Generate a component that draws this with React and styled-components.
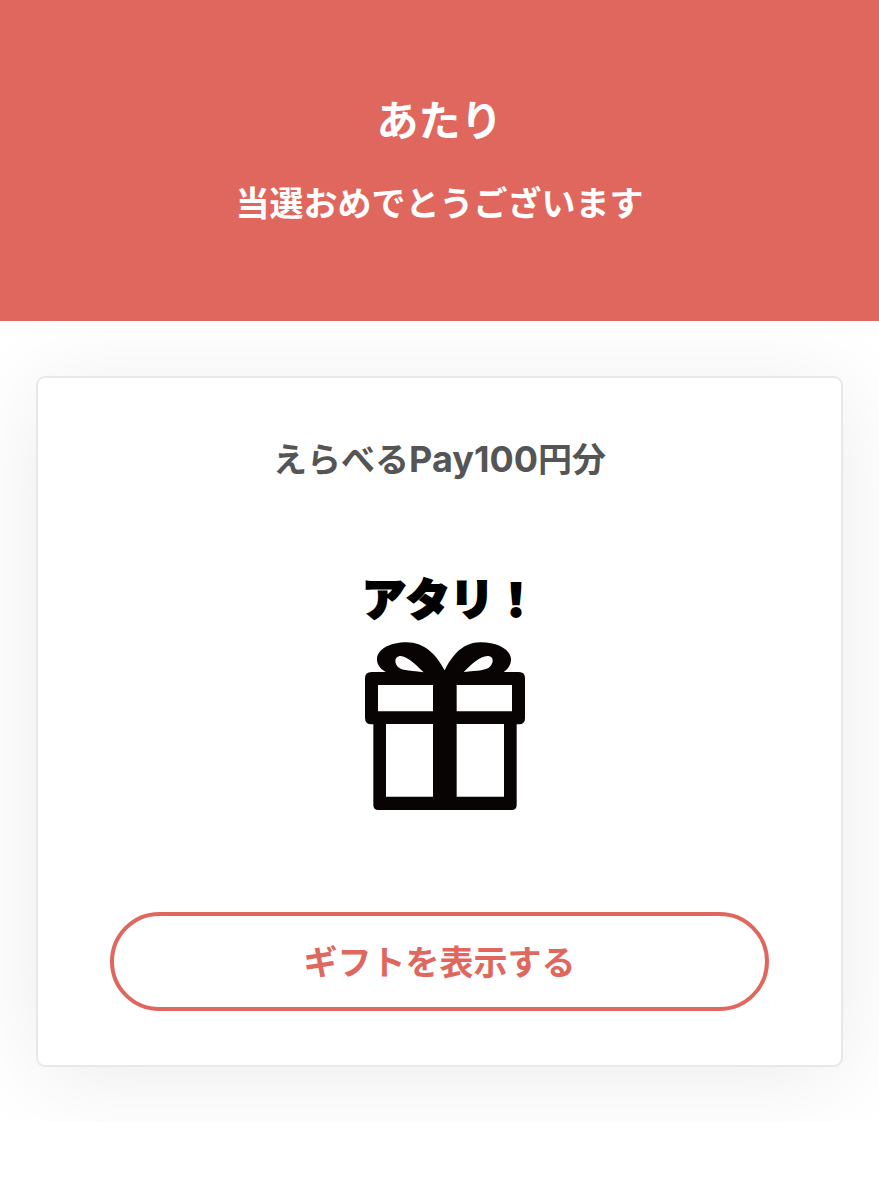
import React from 'react'
import styled, { createGlobalStyle } from 'styled-components'

const accent = '#e0675e';

const GlobalStyle = createGlobalStyle`
  * {
    box-sizing: border-box;
  }

  body {
    margin: 0;
    background-color: #fff;
    font-family: Inter, "Noto Sans CJK JP", sans-serif;
    font-weight: 600;
  }
`;

const Header = styled.header`
  position: relative;
  z-index: 1;
  padding: 89px 24px 91px;
  color: #fff;
  text-align: center;
  background-color: ${accent};
`;

const Title = styled.h1`
  margin: 0 0 25px;
  font-size: 42px;
  font-weight: 600;
  line-height: 64px;
`;

const Lead = styled.p`
  margin: 0;
  font-size: 34px;
  line-height: 52px;
`;

const Card = styled.main`
  display: flex;
  flex-direction: column;
  align-items: center;
  margin: 55px 36px;
  padding: 56px 72px 54px;
  border: 2px solid #e8e8e8;
  border-radius: 9px;
  background-color: #fff;
  box-shadow: 0 10px 90px rgba(0, 0, 0, 0.08);
`;

const GiftName = styled.h2`
  margin: 0 0 88px;
  color: #555;
  font-size: 34px;
  font-weight: 600;
  line-height: 52px;
`;

const Brand = styled.span`
  font-size: 36px;
  font-weight: 700;
  line-height: 1;
`;

const Picture = styled.figure`
  display: flex;
  flex-direction: column;
  margin: 0 0 102px;
  padding-left: 21px;
`;

const PictureText = styled.figcaption`
  margin-bottom: 16px;
  color: #000;
  font-size: 44px;
  font-weight: 900;
  line-height: 52px;
  -webkit-text-stroke: 2px #000;
`;

const GiftIcon = styled.svg`
  display: block;
  width: 176px;
  height: 168px;
`;

const Button = styled.button`
  width: 100%;
  padding: 21px 24px 18px;
  border: 4px solid ${accent};
  border-radius: 50px;
  color: ${accent};
  font-family: inherit;
  font-size: 34px;
  font-weight: 600;
  line-height: 52px;
  background-color: #fff;
  cursor: pointer;
`;

const Gift = () => (
  <GiftIcon viewBox="36 215 528 504" aria-hidden="true">
    <path
      fill="#080404"
      fillRule="evenodd"
      d="M65 305H107C88 293 80 280 81 264C84 235 122 216 170 216C222 217 257 249 284 300C309 250 341 217 390 216C440 215 480 236 483 265C484 282 475 295 461 305H507Q525 305 525 323V444Q525 462 507 462H500V704Q500 719 485 719H85Q70 719 70 704V462H65Q45 462 45 442V323Q45 305 65 305Z
      M149 257C135 260 132 274 142 288C151 300 170 300 221 306C200 286 171 255 149 257Z
      M415 257C392 255 361 285 341 305C385 301 410 301 421 288C432 274 430 258 415 257Z
      M84 344V423H249V344Z M320 344V423H486V344Z
      M108 461V679H249V461Z M320 461V679H462V461Z"
    />
  </GiftIcon>
)

class App extends React.Component {
  render() {
    return (
      <>
        <GlobalStyle/>
        <Header>
          <Title>あたり</Title>
          <Lead>当選おめでとうございます</Lead>
        </Header>
        <Card>
          <GiftName>えらべる<Brand>Pay100</Brand>円分</GiftName>
          <Picture>
            <PictureText>アタリ！</PictureText>
            <Gift/>
          </Picture>
          <Button type="button">ギフトを表示する</Button>
        </Card>
      </>
    )
  }
}

export default App
